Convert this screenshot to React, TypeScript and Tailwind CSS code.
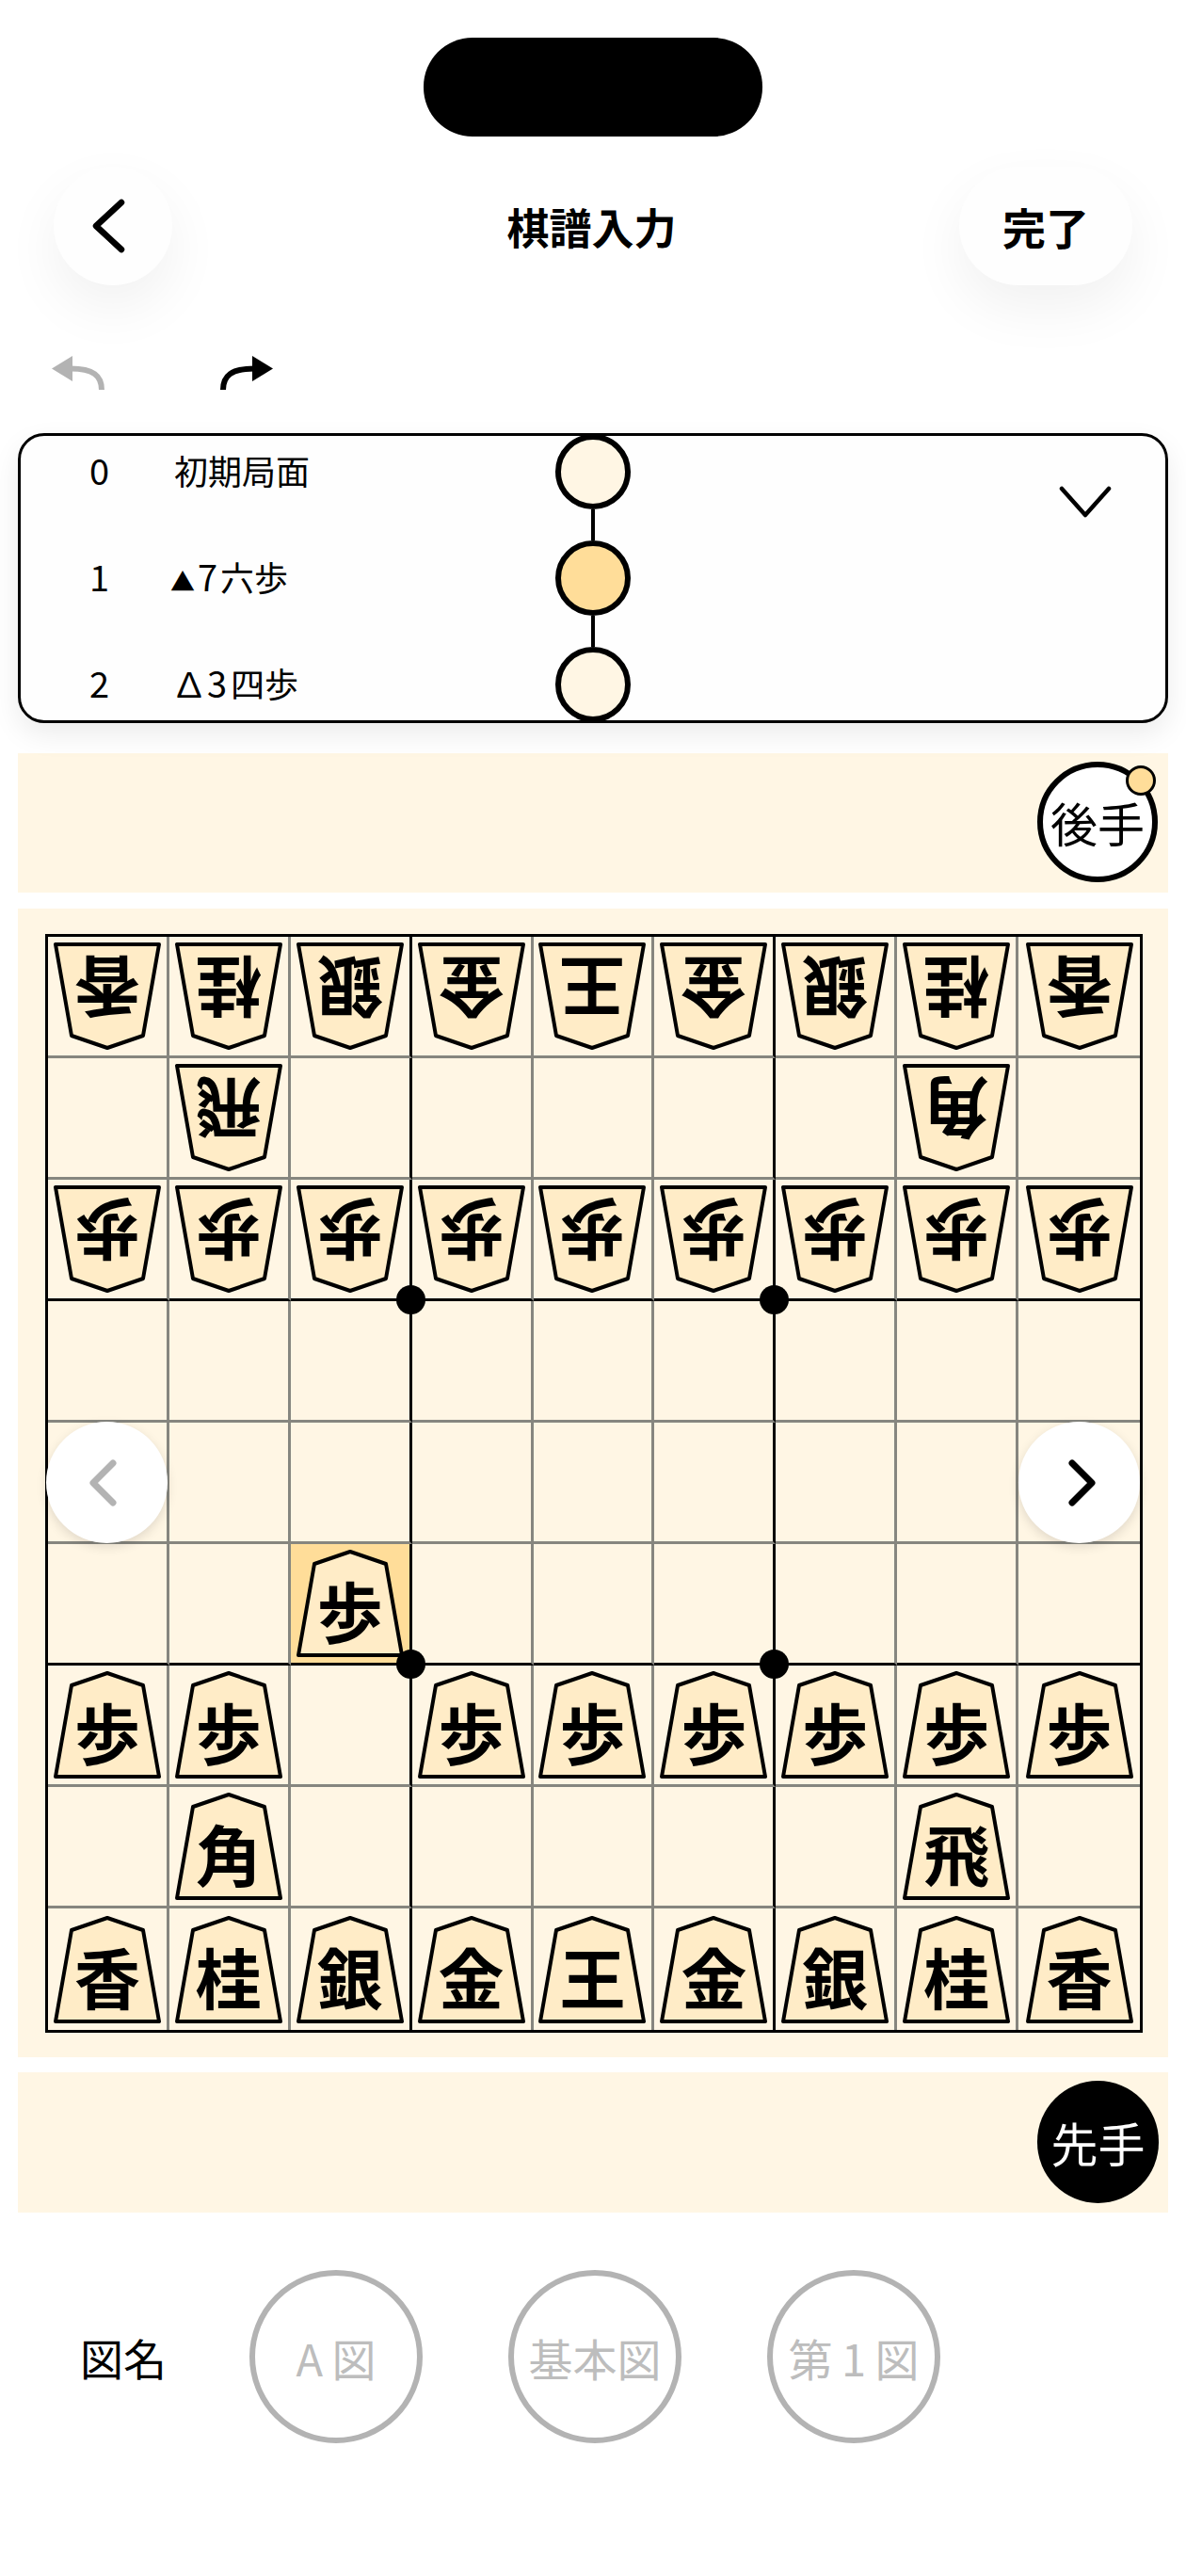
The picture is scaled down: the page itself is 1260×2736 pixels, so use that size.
import { Fragment } from 'react';

const BACK_RANK = ['香', '桂', '銀', '金', '王', '金', '銀', '桂', '香'];

// 9x9 board: [row][col] -> piece, gote pieces are drawn upside down
type Piece = { label: string; gote?: boolean };

function buildBoard() {
    const board: (Piece | null)[][] = Array.from({ length: 9 }, () => Array(9).fill(null));
    BACK_RANK.forEach((label, col) => {
        board[0][col] = { label, gote: true };
        board[8][col] = { label };
    });
    for (let col = 0; col < 9; col++) {
        board[2][col] = { label: '歩', gote: true };
        if (col !== 2) board[6][col] = { label: '歩' };
    }
    board[5][2] = { label: '歩' };
    board[1][1] = { label: '飛', gote: true };
    board[1][7] = { label: '角', gote: true };
    board[7][1] = { label: '角' };
    board[7][7] = { label: '飛' };
    return board;
}

function MoveText({ num }: { num: string }) {
    if (num === '0') return <>初期局面</>;
    if (num === '1') {
        return (
            <>
                <span className="-ml-[4px] mr-[3px] text-[26px]">▲</span>
                <span className="text-[38px] mr-[3px]">7</span>六歩
            </>
        );
    }
    return (
        <>
            <span className="-ml-[2px]">∆</span>
            <span className="text-[38px] ml-[1px] mr-[4px]">3</span>四歩
        </>
    );
}

function ShogiPiece({ label, gote }: Piece) {
    return (
        <div className={`relative w-[114px] h-[114px] flex items-center justify-center ${gote ? 'rotate-180' : ''}`}>
            <svg viewBox="0 0 114 114" className="absolute inset-0 w-full h-full">
                <polygon
                    points="57,2 95,15 112,112 2,112 19,15"
                    fill="#ffecc7"
                    stroke="#000"
                    strokeWidth="4"
                    strokeLinejoin="round"
                />
            </svg>
            <span className="relative mt-[14px] text-[70px] leading-none font-bold text-black">{label}</span>
        </div>
    );
}

function cellClass(row: number, col: number) {
    const right = col === 8 ? '' : col === 2 || col === 5 ? 'border-r-[3px] border-r-black' : 'border-r-[3px] border-r-[#86867f]';
    const bottom = row === 8 ? '' : row === 2 || row === 5 ? 'border-b-[3px] border-b-black' : 'border-b-[3px] border-b-[#86867f]';
    return `${right} ${bottom}`;
}

function Board() {
    const board = buildBoard();
    return (
        <div className="relative w-[1166px] h-[1167px] border-[3px] border-black grid grid-cols-9 grid-rows-9">
            {board.map((cols, row) =>
                cols.map((piece, col) => (
                    <div
                        key={`${row}-${col}`}
                        className={`relative flex items-center justify-center ${cellClass(row, col)} ${row === 5 && col === 2 ? 'bg-[#ffdd99]' : ''}`}
                    >
                        {piece && <ShogiPiece {...piece} />}
                        {(row === 2 || row === 5) && (col === 2 || col === 5) && (
                            <span className="absolute -right-[17px] -bottom-[17px] w-[31px] h-[31px] rounded-full bg-black z-10" />
                        )}
                    </div>
                )),
            )}
            <button className="absolute left-[-2px] top-[515px] w-[129px] h-[129px] rounded-full bg-white shadow-[0_4px_12px_rgba(0,0,0,0.12)] flex items-center justify-center pr-[8px] z-20">
                <svg width="34" height="50" viewBox="0 0 34 50" fill="none" stroke="#b3b3b3" strokeWidth="7" strokeLinecap="round" strokeLinejoin="round">
                    <path d="M27 4 L6 25 L27 46" />
                </svg>
            </button>
            <button className="absolute left-[1031px] top-[515px] w-[129px] h-[129px] rounded-full bg-white shadow-[0_4px_12px_rgba(0,0,0,0.12)] flex items-center justify-center pl-[4px] z-20">
                <svg width="34" height="50" viewBox="0 0 34 50" fill="none" stroke="#000" strokeWidth="7" strokeLinecap="round" strokeLinejoin="round">
                    <path d="M7 4 L28 25 L7 46" />
                </svg>
            </button>
        </div>
    );
}

export default function App() {
    return (
        <div className="w-[1260px] h-[2736px] bg-white pt-[40px] text-black font-['Noto_Sans_CJK_JP','Liberation_Sans',sans-serif]">
            <div className="mx-auto w-[360px] h-[105px] rounded-[52px] bg-black" />

            <header className="mt-[32px] px-[57px] h-[126px] flex items-center">
                <div className="flex-1">
                    <button className="w-[126px] h-[126px] rounded-full bg-[#fefefe] shadow-[0_24px_60px_rgba(0,0,0,0.06)] flex items-center justify-center pr-[10px]">
                        <svg width="36" height="60" viewBox="0 0 36 60" fill="none" stroke="#000" strokeWidth="6.5" strokeLinecap="round" strokeLinejoin="round">
                            <path d="M32 5 L5 30 L32 55" />
                        </svg>
                    </button>
                </div>
                <h1 className="text-[45px] font-bold leading-none pr-[3px]">棋譜入力</h1>
                <div className="flex-1 flex justify-end">
                    <button className="w-[184px] h-[126px] rounded-[63px] bg-[#fefefe] shadow-[0_24px_60px_rgba(0,0,0,0.06)] text-[46px] font-bold leading-none">
                        完了
                    </button>
                </div>
            </header>

            <div className="mt-[75px] pl-[55px] flex gap-[119px]">
                <svg width="58" height="36" viewBox="0 0 58 36" fill="#b3b3b3">
                    <path d="M22 0 L0 13.500 L22 27 Z" />
                    <path d="M20 13.500 C44 13.500 53 21 53 36" fill="none" stroke="#b3b3b3" strokeWidth="6" />
                </svg>
                <svg width="58" height="36" viewBox="0 0 58 36" fill="#000">
                    <path d="M36 0 L58 13.500 L36 27 Z" />
                    <path d="M38 13.500 C14 13.500 5 21 5 36" fill="none" stroke="#000" strokeWidth="6" />
                </svg>
            </div>

            <section className="relative mt-[46px] mx-[19px] h-[308px] rounded-[28px] border-[3px] border-black bg-[#fefefe] shadow-[0_12px_30px_rgba(0,0,0,0.08)] overflow-hidden">
                <div className="-mt-[2px] flex flex-col">
                    {['0', '1', '2'].map((num) => (
                        <Fragment key={num}>
                            {num !== '0' && <div className="ml-[606px] w-[4px] h-[33px] bg-black" />}
                            <div className="h-[80px] flex items-center pl-[73px]">
                                <span className="w-[90px] pb-[4px] text-[38px] leading-none">{num}</span>
                                <span className="w-[405px] pb-[4px] text-[36px] leading-none whitespace-nowrap">
                                    <MoveText num={num} />
                                </span>
                                <span
                                    className={`w-[80px] h-[80px] rounded-full border-[6px] border-black ${num === '1' ? 'bg-[#ffdd99]' : 'bg-[#fff6e4]'}`}
                                />
                            </div>
                        </Fragment>
                    ))}
                </div>
                <svg className="absolute left-[1103px] top-[53px]" width="56" height="34" viewBox="0 0 56 34" fill="none" stroke="#000" strokeWidth="4.500" strokeLinecap="round" strokeLinejoin="round">
                    <path d="M3 3 L28 31 L53 3" />
                </svg>
            </section>

            <div className="mt-[32px] mx-[19px] h-[148px] bg-[#fff6e4] flex justify-end pt-[9px] pr-[11px]">
                <div className="relative w-[128px] h-[128px] rounded-full border-[6px] border-black bg-white flex items-center justify-center text-[50px] leading-none whitespace-nowrap">
                    後手
                    <span className="absolute right-[-4px] top-[-2px] w-[32px] h-[32px] rounded-full border-[3px] border-black bg-[#ffdd99]" />
                </div>
            </div>

            <div className="mt-[17px] mx-[19px] h-[1220px] bg-[#fff6e4] pt-[27px] pl-[29px]">
                <Board />
            </div>

            <div className="mt-[16px] mx-[19px] h-[149px] bg-[#fff6e4] flex justify-end pt-[9px] pr-[10px]">
                <div className="w-[129px] h-[130px] rounded-full bg-black text-white flex items-center justify-center text-[50px] leading-none">
                    先手
                </div>
            </div>

            <div className="mt-[61px] pl-[85px] flex items-center">
                <span className="w-[180px] text-[46px] leading-none">図名</span>
                <div className="flex gap-[91px]">
                    {['A\u2009図', '基本図', '第\u20091\u2009図'].map((name) => (
                        <button
                            key={name}
                            className="w-[184px] h-[184px] rounded-full border-[6px] border-[#b3b3b3] flex items-center justify-center text-[47px] leading-none whitespace-nowrap text-[#bdbdbd]"
                        >
                            {name}
                        </button>
                    ))}
                </div>
            </div>
        </div>
    );
}
